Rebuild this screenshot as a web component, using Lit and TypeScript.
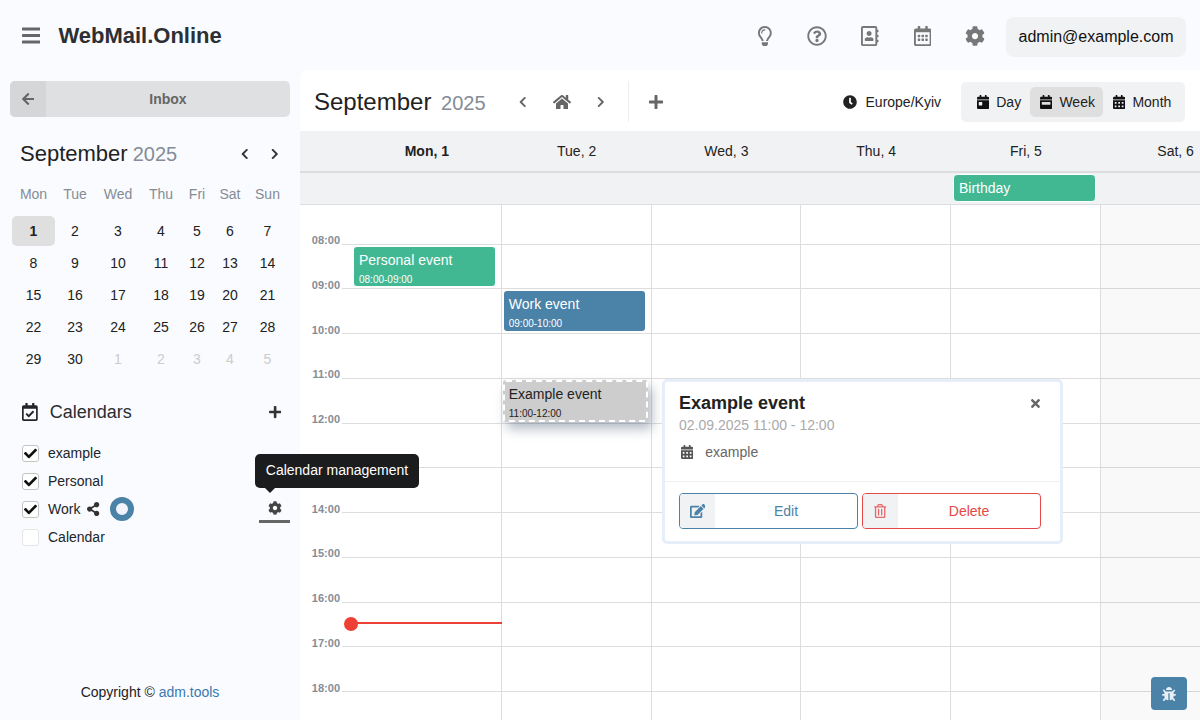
import { LitElement, html, css, svg } from "lit";
import { customElement } from "lit/decorators.js";

const P: Record<string, [number, string]> = {
  bars: [448, "M16 132h416c8.837 0 16-7.163 16-16V76c0-8.837-7.163-16-16-16H16C7.163 60 0 67.163 0 76v40c0 8.837 7.163 16 16 16zm0 160h416c8.837 0 16-7.163 16-16v-40c0-8.837-7.163-16-16-16H16c-8.837 0-16 7.163-16 16v40c0 8.837 7.163 16 16 16zm0 160h416c8.837 0 16-7.163 16-16v-40c0-8.837-7.163-16-16-16H16c-8.837 0-16 7.163-16 16v40c0 8.837 7.163 16 16 16z"],
  cog: [512, "M487.4 315.7l-42.6-24.6c4.3-23.2 4.3-47 0-70.2l42.6-24.6c4.9-2.8 7.1-8.6 5.5-14-11.1-35.6-30-67.8-54.7-94.6-3.8-4.1-10-5.1-14.8-2.3L380.8 110c-17.9-15.4-38.5-27.3-60.8-35.1V25.8c0-5.6-3.9-10.5-9.4-11.7-36.7-8.2-74.3-7.8-109.2 0-5.5 1.2-9.4 6.1-9.4 11.7V75c-22.2 7.9-42.8 19.8-60.8 35.1L88.7 85.5c-4.9-2.8-11-1.9-14.8 2.3-24.7 26.7-43.6 58.9-54.7 94.6-1.7 5.4.6 11.2 5.5 14L67.3 221c-4.3 23.2-4.3 47 0 70.2l-42.6 24.6c-4.9 2.8-7.1 8.6-5.5 14 11.1 35.6 30 67.8 54.7 94.6 3.8 4.1 10 5.1 14.8 2.3l42.6-24.6c17.9 15.4 38.5 27.3 60.8 35.1v49.2c0 5.6 3.9 10.5 9.4 11.7 36.7 8.2 74.3 7.8 109.2 0 5.5-1.2 9.4-6.1 9.4-11.7v-49.2c22.2-7.9 42.8-19.8 60.8-35.1l42.6 24.6c4.9 2.8 11 1.9 14.8-2.3 24.7-26.7 43.6-58.9 54.7-94.6 1.5-5.5-.7-11.3-5.6-14.1zM256 336c-44.1 0-80-35.9-80-80s35.9-80 80-80 80 35.9 80 80-35.9 80-80 80z"],
  left: [320, "M34.52 239.03L228.87 44.69c9.37-9.37 24.57-9.37 33.94 0l22.67 22.67c9.36 9.36 9.37 24.52.04 33.9L131.49 256l154.02 154.75c9.34 9.38 9.32 24.54-.04 33.9l-22.67 22.67c-9.37 9.37-24.57 9.37-33.94 0L34.52 272.97c-9.37-9.37-9.37-24.57 0-33.94z"],
  right: [320, "M285.476 272.971L91.132 467.314c-9.373 9.373-24.569 9.373-33.941 0l-22.667-22.667c-9.357-9.357-9.375-24.522-.04-33.901L188.505 256 34.484 101.255c-9.335-9.379-9.317-24.544.04-33.901l22.667-22.667c9.373-9.373 24.569-9.373 33.941 0L285.475 239.03c9.373 9.372 9.373 24.568.001 33.941z"],
  arrow: [448, "M257.5 445.1l-22.2 22.2c-9.4 9.4-24.6 9.4-33.9 0L7 273c-9.4-9.4-9.4-24.6 0-33.9L201.4 44.7c9.4-9.4 24.6-9.4 33.9 0l22.2 22.2c9.5 9.5 9.3 25-.4 34.3L136.6 216H424c13.3 0 24 10.7 24 24v32c0 13.3-10.7 24-24 24H136.6l120.5 114.8c9.8 9.3 10 24.8.4 34.3z"],
  plus: [448, "M416 208H272V64c0-17.67-14.33-32-32-32h-32c-17.67 0-32 14.33-32 32v144H32c-17.67 0-32 14.33-32 32v32c0 17.67 14.33 32 32 32h144v144c0 17.67 14.33 32 32 32h32c17.67 0 32-14.33 32-32V304h144c17.67 0 32-14.33 32-32v-32c0-17.67-14.33-32-32-32z"],
  times: [352, "M242.72 256l100.07-100.07c12.28-12.28 12.28-32.19 0-44.48l-22.24-22.24c-12.28-12.28-32.19-12.28-44.48 0L176 189.28 75.93 89.21c-12.28-12.28-32.19-12.28-44.48 0L9.21 111.45c-12.28 12.28-12.28 32.19 0 44.48L109.28 256 9.21 356.07c-12.28 12.28-12.28 32.19 0 44.48l22.24 22.24c12.28 12.28 32.2 12.28 44.48 0L176 322.72l100.07 100.07c12.28 12.28 32.2 12.28 44.48 0l22.24-22.24c12.28-12.28 12.28-32.19 0-44.48L242.72 256z"],
  check: [512, "M173.898 439.404l-166.4-166.4c-9.997-9.997-9.997-26.206 0-36.204l36.203-36.204c9.997-9.998 26.207-9.998 36.204 0L192 312.69 432.095 72.596c9.997-9.997 26.207-9.997 36.204 0l36.203 36.204c9.997 9.997 9.997 26.206 0 36.204l-294.4 294.401c-9.998 9.997-26.207 9.997-36.204-.001z"],
  share: [448, "M352 320c-22.608 0-43.387 7.819-59.79 20.895l-102.486-64.054a96.551 96.551 0 0 0 0-41.683l102.486-64.054C308.613 184.181 329.392 192 352 192c53.019 0 96-42.981 96-96S405.019 0 352 0s-96 42.981-96 96c0 7.158.79 14.13 2.276 20.841L155.79 180.895C139.387 167.819 118.608 160 96 160c-53.019 0-96 42.981-96 96s42.981 96 96 96c22.608 0 43.387-7.819 59.79-20.895l102.486 64.054A96.301 96.301 0 0 0 256 416c0 53.019 42.981 96 96 96s96-42.981 96-96-42.981-96-96-96z"],
  clock: [512, "M256,8C119,8,8,119,8,256S119,504,256,504,504,393,504,256,393,8,256,8Zm92.49,313h0l-20,25a16,16,0,0,1-22.49,2.5h0l-67-49.72a40,40,0,0,1-15-31.23V112a16,16,0,0,1,16-16h32a16,16,0,0,1,16,16V256l58,42.5A16,16,0,0,1,348.49,321Z"],
  home: [576, "M280.37 148.26L96 300.11V464a16 16 0 0 0 16 16l112.06-.29a16 16 0 0 0 15.92-16V368a16 16 0 0 1 16-16h64a16 16 0 0 1 16 16v95.64a16 16 0 0 0 16 16.05L464 480a16 16 0 0 0 16-16V300L295.67 148.26a12.19 12.19 0 0 0-15.3 0zM571.6 251.47L488 182.56V44.05a12 12 0 0 0-12-12h-56a12 12 0 0 0-12 12v72.61L318.47 43a48 48 0 0 0-61 0L4.34 251.47a12 12 0 0 0-1.6 16.9l25.5 31A12 12 0 0 0 45.15 301l235.22-193.74a12.19 12.19 0 0 1 15.3 0L530.9 301a12 12 0 0 0 16.9-1.6l25.5-31a12 12 0 0 0-1.7-16.93z"],
  calAlt: [448, "M0 464c0 26.5 21.5 48 48 48h352c26.5 0 48-21.5 48-48V192H0v272zm320-196c0-6.6 5.4-12 12-12h40c6.6 0 12 5.4 12 12v40c0 6.6-5.4 12-12 12h-40c-6.6 0-12-5.4-12-12v-40zm0 128c0-6.6 5.4-12 12-12h40c6.6 0 12 5.4 12 12v40c0 6.6-5.4 12-12 12h-40c-6.6 0-12-5.4-12-12v-40zM192 268c0-6.6 5.4-12 12-12h40c6.6 0 12 5.4 12 12v40c0 6.6-5.4 12-12 12h-40c-6.6 0-12-5.4-12-12v-40zm0 128c0-6.6 5.4-12 12-12h40c6.6 0 12 5.4 12 12v40c0 6.6-5.4 12-12 12h-40c-6.6 0-12-5.4-12-12v-40zM64 268c0-6.6 5.4-12 12-12h40c6.6 0 12 5.4 12 12v40c0 6.6-5.4 12-12 12H76c-6.6 0-12-5.4-12-12v-40zm0 128c0-6.6 5.4-12 12-12h40c6.6 0 12 5.4 12 12v40c0 6.6-5.4 12-12 12H76c-6.6 0-12-5.4-12-12v-40zM400 64h-48V16c0-8.8-7.2-16-16-16h-32c-8.8 0-16 7.2-16 16v48H160V16c0-8.8-7.2-16-16-16h-32c-8.8 0-16 7.2-16 16v48H48C21.5 64 0 85.5 0 112v48h448v-48c0-26.5-21.5-48-48-48z"],
  calDay: [448, "M0 464c0 26.5 21.5 48 48 48h352c26.5 0 48-21.5 48-48V192H0v272zm64-192c0-8.8 7.2-16 16-16h96c8.8 0 16 7.2 16 16v96c0 8.8-7.2 16-16 16H80c-8.8 0-16-7.2-16-16v-96zM400 64h-48V16c0-8.8-7.2-16-16-16h-32c-8.8 0-16 7.2-16 16v48H160V16c0-8.8-7.2-16-16-16h-32c-8.8 0-16 7.2-16 16v48H48C21.5 64 0 85.5 0 112v48h448v-48c0-26.5-21.5-48-48-48z"],
  calWeek: [448, "M0 464c0 26.5 21.5 48 48 48h352c26.5 0 48-21.5 48-48V192H0v272zm64-192c0-8.8 7.2-16 16-16h288c8.8 0 16 7.2 16 16v64c0 8.8-7.2 16-16 16H80c-8.8 0-16-7.2-16-16v-64zM400 64h-48V16c0-8.8-7.2-16-16-16h-32c-8.8 0-16 7.2-16 16v48H160V16c0-8.8-7.2-16-16-16h-32c-8.8 0-16 7.2-16 16v48H48C21.5 64 0 85.5 0 112v48h448v-48c0-26.5-21.5-48-48-48z"],
  edit: [576, "M402.6 83.2l90.2 90.2c3.8 3.8 3.8 10 0 13.8L274.4 405.6l-92.8 10.3c-12.4 1.4-22.9-9.1-21.5-21.5l10.3-92.8L388.8 83.2c3.8-3.8 10-3.8 13.8 0zm162-22.9l-48.8-48.8c-15.2-15.2-39.9-15.2-55.2 0l-35.4 35.4c-3.8 3.8-3.8 10 0 13.8l90.2 90.2c3.8 3.8 10 3.8 13.8 0l35.4-35.4c15.2-15.3 15.2-40 0-55.2zM384 346.2V448H64V128h229.8c3.2 0 6.2-1.3 8.5-3.5l40-40c7.6-7.6 2.2-20.5-8.5-20.5H48C21.5 64 0 85.5 0 112v352c0 26.5 21.5 48 48 48h352c26.5 0 48-21.5 48-48V306.2c0-10.7-12.9-16-20.5-8.5l-40 40c-2.2 2.3-3.5 5.3-3.5 8.5z"],
  trash: [448, "M268 416h24a12 12 0 0 0 12-12V188a12 12 0 0 0-12-12h-24a12 12 0 0 0-12 12v216a12 12 0 0 0 12 12zM432 80h-82.41l-34-56.7A48 48 0 0 0 274.41 0H173.59a48 48 0 0 0-41.16 23.3L98.41 80H16A16 16 0 0 0 0 96v16a16 16 0 0 0 16 16h16v336a48 48 0 0 0 48 48h288a48 48 0 0 0 48-48V128h16a16 16 0 0 0 16-16V96a16 16 0 0 0-16-16zM171.84 50.91A6 6 0 0 1 177 48h94a6 6 0 0 1 5.15 2.91L293.61 80H154.39zM368 464H80V128h288zm-212-48h24a12 12 0 0 0 12-12V188a12 12 0 0 0-12-12h-24a12 12 0 0 0-12 12v216a12 12 0 0 0 12 12z"],
  question: [512, "M256 8C119.043 8 8 119.083 8 256c0 136.997 111.043 248 248 248s248-111.003 248-248C504 119.083 392.957 8 256 8zm0 448c-110.532 0-200-89.431-200-200 0-110.495 89.472-200 200-200 110.491 0 200 89.471 200 200 0 110.53-89.431 200-200 200zm107.244-255.2c0 67.052-72.421 68.084-72.421 92.863V300c0 6.627-5.373 12-12 12h-45.647c-6.627 0-12-5.373-12-12v-8.659c0-35.745 27.1-50.034 47.579-61.516 17.561-9.845 28.324-16.541 28.324-29.579 0-17.246-21.999-28.693-39.784-28.693-23.189 0-33.894 10.977-48.942 29.969-4.057 5.12-11.46 6.071-16.666 2.124l-27.824-21.098c-5.107-3.872-6.251-11.066-2.644-16.363C184.846 131.491 214.94 112 261.794 112c49.071 0 101.45 38.304 101.45 88.8zM298 368c0 23.159-18.841 42-42 42s-42-18.841-42-42 18.841-42 42-42 42 18.841 42 42z"],
  bulb: [352, "M176 80c-52.94 0-96 43.06-96 96 0 8.84 7.16 16 16 16s16-7.16 16-16c0-35.3 28.72-64 64-64 8.84 0 16-7.16 16-16s-7.16-16-16-16zM96.06 459.17c0 3.15.93 6.22 2.68 8.84l24.51 36.84c2.97 4.46 7.97 7.14 13.32 7.14h78.85c5.36 0 10.36-2.68 13.32-7.14l24.51-36.84c1.74-2.62 2.67-5.7 2.68-8.84l.05-43.18H96.02l.04 43.18zM176 0C73.72 0 0 82.97 0 176c0 44.37 16.45 84.85 43.56 115.78 16.64 18.99 42.74 58.8 52.42 92.16v.06h48v-.12c-.01-4.77-.72-9.51-2.15-14.07-5.59-17.81-22.82-64.77-62.17-109.67-20.54-23.43-31.52-53.15-31.61-84.14-.2-73.64 59.67-128 127.95-128 70.58 0 128 57.42 128 128 0 30.97-11.24 60.85-31.65 84.14-39.11 44.61-56.42 91.47-62.1 109.46a47.507 47.507 0 0 0-2.22 14.3v.1h48v-.05c9.68-33.37 35.78-73.18 52.42-92.16C335.55 260.85 352 220.37 352 176 352 78.8 273.2 0 176 0z"],
  book: [448, "M436 160c6.6 0 12-5.4 12-12v-40c0-6.6-5.4-12-12-12h-20V48c0-26.5-21.5-48-48-48H48C21.5 0 0 21.5 0 48v416c0 26.5 21.5 48 48 48h320c26.5 0 48-21.5 48-48v-48h20c6.6 0 12-5.4 12-12v-40c0-6.6-5.4-12-12-12h-20v-64h20c6.6 0 12-5.4 12-12v-40c0-6.6-5.4-12-12-12h-20v-64h20zm-68 304H48V48h320v416zM208 256c35.3 0 64-28.7 64-64s-28.7-64-64-64-64 28.7-64 64 28.7 64 64 64zm-89.6 128h179.2c12.4 0 22.4-8.6 22.4-19.2v-19.2c0-31.8-30.1-57.6-67.2-57.6-10.8 0-18.7 8-44.8 8-26.9 0-33.4-8-44.8-8-37.1 0-67.2 25.8-67.2 57.6v19.2c0 10.6 10 19.2 22.4 19.2z"],
  calReg: [448, "M148 288h-40c-6.6 0-12-5.4-12-12v-40c0-6.6 5.4-12 12-12h40c6.6 0 12 5.4 12 12v40c0 6.6-5.4 12-12 12zm108-12v-40c0-6.6-5.4-12-12-12h-40c-6.6 0-12 5.4-12 12v40c0 6.6 5.4 12 12 12h40c6.6 0 12-5.4 12-12zm96 0v-40c0-6.6-5.4-12-12-12h-40c-6.6 0-12 5.4-12 12v40c0 6.6 5.4 12 12 12h40c6.6 0 12-5.4 12-12zm-96 96v-40c0-6.6-5.4-12-12-12h-40c-6.6 0-12 5.4-12 12v40c0 6.6 5.4 12 12 12h40c6.6 0 12-5.4 12-12zm-96 0v-40c0-6.6-5.4-12-12-12h-40c-6.6 0-12 5.4-12 12v40c0 6.6 5.4 12 12 12h40c6.6 0 12-5.4 12-12zm192 0v-40c0-6.6-5.4-12-12-12h-40c-6.6 0-12 5.4-12 12v40c0 6.6 5.4 12 12 12h40c6.6 0 12-5.4 12-12zm96-260v352c0 26.5-21.5 48-48 48H48c-26.5 0-48-21.5-48-48V112c0-26.5 21.5-48 48-48h48V12c0-6.6 5.4-12 12-12h40c6.6 0 12 5.4 12 12v52h128V12c0-6.6 5.4-12 12-12h40c6.6 0 12 5.4 12 12v52h48c26.5 0 48 21.5 48 48zm-48 346V160H48v298c0 3.3 2.7 6 6 6h340c3.3 0 6-2.7 6-6z"],
  calCheck: [448, "M400 64h-48V12c0-6.627-5.373-12-12-12h-40c-6.627 0-12 5.373-12 12v52H160V12c0-6.627-5.373-12-12-12h-40c-6.627 0-12 5.373-12 12v52H48C21.49 64 0 85.49 0 112v352c0 26.51 21.49 48 48 48h352c26.51 0 48-21.49 48-48V112c0-26.51-21.49-48-48-48zm-6 400H54a6 6 0 0 1-6-6V160h352v298a6 6 0 0 1-6 6zm-52.849-200.65L198.842 404.519c-4.705 4.667-12.303 4.637-16.971-.068l-75.091-75.699c-4.667-4.705-4.637-12.303.068-16.971l22.719-22.536c4.705-4.667 12.303-4.637 16.97.069l44.104 44.461 111.072-110.181c4.705-4.667 12.303-4.637 16.971.068l22.536 22.718c4.667 4.706 4.637 12.304-.069 16.971z"],
  bug: [512, "M511.988 288.9c-.478 17.43-15.217 31.1-32.653 31.1H424v16c0 21.864-4.882 42.584-13.6 61.145l60.228 60.228c12.496 12.497 12.496 32.758 0 45.255-12.498 12.497-32.759 12.496-45.256 0l-54.736-54.736C345.886 467.965 314.351 480 280 480V236c0-6.627-5.373-12-12-12h-24c-6.627 0-12 5.373-12 12v244c-34.351 0-65.886-12.035-90.636-32.108l-54.736 54.736c-12.498 12.497-32.759 12.496-45.256 0-12.496-12.497-12.496-32.758 0-45.255l60.228-60.228C92.882 378.584 88 357.864 88 336v-16H32.666C15.23 320 .491 306.33.013 288.9-.484 270.816 14.028 256 32 256h56v-58.745l-46.628-46.628c-12.496-12.497-12.496-32.758 0-45.255 12.498-12.497 32.758-12.497 45.256 0L141.255 160h229.489l54.627-54.627c12.498-12.497 32.758-12.497 45.256 0 12.496 12.497 12.496 32.758 0 45.255L424 197.255V256h56c17.972 0 32.484 14.816 31.988 32.9zM257 0c-61.856 0-112 50.144-112 112h224C369 50.144 318.856 0 257 0z"],
};

const icon = (name: string, h: number) => {
  const [w, d] = P[name];
  return html`<svg class="ic" viewBox="0 0 ${w} 512" height=${h} width=${(h * w) / 512}>${svg`<path fill="currentColor" d=${d}></path>`}</svg>`;
};

const WEEK = ["Mon", "Tue", "Wed", "Thu", "Fri", "Sat", "Sun"];
const DAYS: [number, boolean][] = [];
for (let i = 1; i <= 30; i++) DAYS.push([i, false]);
for (let i = 1; i <= 5; i++) DAYS.push([i, true]);
const COLS = ["Mon, 1", "Tue, 2", "Wed, 3", "Thu, 4", "Fri, 5", "Sat, 6"];
/* The 13:00 label sits fully under the tooltip in the reference, so it shows no text there. */
const HOURS = ["08:00", "09:00", "10:00", "11:00", "12:00", "", "14:00", "15:00", "16:00", "17:00", "18:00"];
const CALS: [string, boolean][] = [["example", true], ["Personal", true], ["Work", true], ["Calendar", false]];

@customElement("app-root")
export class AppRoot extends LitElement {
  static styles = css`
    :host { display: block; width: 1200px; height: 720px; overflow: hidden; background: #f9fbff; font-family: "Liberation Sans", Arial, sans-serif; color: #212529; font-size: 14px; }
    * { box-sizing: border-box; }
    .ic { display: block; flex: none; }
    .app { display: flex; flex-direction: column; height: 720px; }
    .top { height: 71px; flex: none; display: flex; align-items: center; padding: 0 14px 0 22px; }
    .burger { color: #666; margin-right: 18px; margin-top: -1px; }
    .logo { font-size: 22px; font-weight: 700; color: #2d2f33; flex: 1; margin-top: 1px; }
    .top-ic { width: 52.5px; display: flex; justify-content: center; color: #777; margin-top: 1px; }
    .user { margin-left: 5px; margin-top: 3px; width: 180px; height: 40px; border-radius: 8px; background: #f1f2f4; display: flex; align-items: center; justify-content: center; font-size: 16px; color: #111; }
    .body { flex: 1; display: flex; min-height: 0; }
    .side { width: 300px; flex: none; display: flex; flex-direction: column; padding: 10px 10px 0; position: relative; z-index: 2; }
    .inbox { height: 36px; display: flex; border-radius: 5px; overflow: hidden; background: #dfe0e2; font-weight: 700; font-size: 14px; color: #666; }
    .inbox .back { width: 36px; background: #d5d6d8; display: flex; align-items: center; justify-content: center; }
    .inbox .lab { flex: 1; display: flex; align-items: center; justify-content: center; }
    .mhead { display: flex; align-items: center; margin: 25px 0 0 10px; height: 24px; }
    .mtitle { font-size: 22px; flex: 1; color: #222; }
    .mtitle span { font-size: 20px; color: #858c96; margin-left: -1px; }
    .mnav { display: flex; color: #333; gap: 22px; margin-right: 12px; align-items: center; }
    .mgrid { display: grid; grid-template-columns: 43px 40px 46px 40px 32px 34px 41px; grid-auto-rows: 30px; row-gap: 2px; margin: 18px 0 0 2px; text-align: center; }
    .wd { color: #858c96; height: 22px; line-height: 18px; margin-top: 1px; align-self: start; }
    .d { display: flex; align-items: center; justify-content: center; color: #222; border-radius: 5px; }
    .d.sel { background: #dfdfdf; font-weight: 700; }
    .d.off { color: #ccc; }
    .chead { display: flex; align-items: center; margin: 26px 0 0 12px; height: 24px; }
    .chead .t { font-size: 18px; margin-left: 12px; flex: 1; color: #2a2d31; }
    .chead .add { margin-right: 9px; color: #333; }
    .clist { margin: 15px 0 0 12px; display: flex; flex-direction: column; }
    .crow { height: 28px; display: flex; align-items: center; position: relative; }
    .cb { width: 17px; height: 17px; border: 1px solid #c4c4c4; border-radius: 3px; background: #fff; display: flex; align-items: center; justify-content: center; color: #111; margin-right: 9px; }
    .cb.off { border-color: #e6e6e6; }
    .share { color: #333; margin-left: 7px; }
    .ring { width: 24px; height: 24px; border-radius: 50%; border: 6px solid #4b82a8; background: #f1f5fb; margin-left: 10px; }
    .mgr { position: absolute; left: 237px; top: 0; width: 31px; height: 28px; border-bottom: 3px solid #666; display: flex; align-items: center; justify-content: center; color: #444; }
    .tip { position: absolute; left: -4px; top: -41px; height: 34px; width: 164px; padding-bottom: 2px; background: #1b1c1e; color: #fff; border-radius: 5px; display: flex; align-items: center; justify-content: center; white-space: nowrap; }
    .tip::after { content: ""; position: absolute; left: 10px; bottom: -5px; border: 5px solid transparent; border-bottom: 0; border-top-color: #1b1c1e; }
    .copy { margin-top: auto; height: 28px; margin-bottom: 14px; text-align: center; color: #222; line-height: 28px; }
    .copy a { color: #3a78b0; text-decoration: none; }
    .main { flex: 1; min-width: 0; background: #fff; border-top-left-radius: 8px; display: flex; flex-direction: column; position: relative; overflow: hidden; margin-top: -1px; }
    .tb { height: 61px; flex: none; display: flex; align-items: center; padding: 2px 15px 0 14px; }
    .tb-title { font-size: 24px; color: #222; width: 197px; white-space: nowrap; }
    .tb-title span { font-size: 20px; color: #858c96; margin-left: 3px; }
    .nav { color: #666; display: flex; align-items: center; width: 118px; }
    .nav .s { width: 24px; display: flex; justify-content: center; }
    .nav .h { width: 54px; display: flex; justify-content: center; }
    .sep { width: 1px; height: 41px; background: #eee; margin-left: -1px; }
    .tb-add { color: #666; margin-left: 20px; flex: 1; }
    .tz { display: flex; align-items: center; color: #222; margin-right: 20px; }
    .tz .ic { margin-right: 9px; }
    .seg { height: 40px; width: 224px; background: #f1f2f4; border-radius: 5px; display: flex; align-items: center; padding: 0 5px; margin-top: 1px; }
    .seg div { height: 30px; display: flex; align-items: center; color: #222; border-radius: 5px; }
    .seg .ic { color: #111; margin-right: 7px; }
    .seg .a { background: #dfdfdf; padding: 0 8px 0 10px; margin: 0 10px 0 9px; width: 73px; }
    .seg .p { padding-left: 11px; }
    .seg .n { padding: 0; }
    .heads-wrap { background: #f1f2f4; flex: none; overflow: hidden; height: 42px; border-bottom: 2px solid #dcdde0; }
    .heads { height: 40px; display: grid; grid-template-columns: repeat(6, 149.75px); padding-left: 52px; width: 950.5px; }
    .hc { display: flex; align-items: center; justify-content: center; color: #222; }
    .hc.b { font-weight: 700; }
    .allday { height: 32px; flex: none; background: #f1f2f4; border-bottom: 1px solid #dcdde0; padding: 1px 0 0 653px; }
    .ev { border-radius: 3px; color: #fff; padding: 5px; overflow: hidden; }
    .ev .n { line-height: 16px; white-space: nowrap; }
    .ev .tm { font-size: 10px; line-height: 12px; margin-top: 6px; }
    .bd { width: 143px; height: 28px; background: #41b892; border: 1px solid #fff; border-radius: 4px; color: #fff; padding: 5px 5px 0; line-height: 17px; }
    .grid { flex: 1; position: relative; min-height: 0; overflow: hidden; background: #fff; padding-top: 38.6px; }
    .hr { height: 44.75px; display: flex; }
    .hr .l { width: 42px; padding-right: 2px; text-align: right; font-size: 11px; font-weight: 700; color: #868c96; line-height: 12px; margin-top: -9.6px; height: 12px; }
    .hr .ln { flex: 1; border-top: 1px solid #ddd; }
    .cols { position: absolute; left: 52px; top: 0; bottom: 0; display: grid; grid-template-columns: repeat(6, 149.75px); }
    .col { border-right: 1px solid #ddd; position: relative; }
    .col.we { background: rgba(0,0,0,0.025); border-right: 0; }
    .col .ev { position: absolute; left: 2px; width: 141px; }
    .ex { background: #cdcdcd; color: #222 !important; border: 2px dashed #fff; padding: 4px 4px !important; box-shadow: 4px 7px 12px rgba(40,60,90,.35); width: 145px !important; left: 1px !important; }
    .now { position: absolute; left: 44px; top: 412px; width: 158px; height: 14px; }
    .now .dot { position: absolute; left: 0; top: 0; width: 14px; height: 14px; border-radius: 50%; background: #ee4035; }
    .now .bar { position: absolute; left: 7px; right: 0; top: 5px; height: 2px; background: #ee4035; }
    .pop { position: absolute; left: 362px; top: 309px; width: 401px; height: 165px; background: #fff; border: 3px solid #e6eefa; border-radius: 5px; display: flex; flex-direction: column; }
    .pop .in { height: 100px; padding: 10px 14px 0 14px; border-bottom: 1px solid #f0f0f0; flex: none; position: relative; }
    .pop .ttl { font-size: 18px; font-weight: 700; color: #222; line-height: 22px; }
    .pop .dt { color: #aaa; line-height: 16px; margin-top: 3px; }
    .pop .loc { display: flex; align-items: center; color: #666; margin-top: 11px; padding-left: 2px; line-height: 16px; }
    .pop .loc .ic { color: #555; margin-right: 12px; }
    .pop .x { position: absolute; right: 20px; top: 15px; color: #666; }
    .acts { display: flex; gap: 4px; padding: 11px 19px 0 14px; }
    .btn { flex: 1; height: 36px; border: 1px solid; border-radius: 4px; display: flex; overflow: hidden; background: #fff; }
    .btn .bi { width: 35px; background: #f1f2f4; display: flex; align-items: center; justify-content: center; flex: none; }
    .btn .bl { flex: 1; display: flex; align-items: center; justify-content: center; }
    .btn.e { color: #4b82a8; border-color: #4b82a8; }
    .btn.r { color: #e44848; border-color: #e44848; }
    .btn.r .ic { opacity: .8; }
    .bugb { position: absolute; left: 851px; top: 607px; width: 36px; height: 33px; border-radius: 4px; background: #4b82a8; color: #e8f0f6; display: flex; align-items: center; justify-content: center; }
  `;

  render() {
    return html`<div class="app">
      <div class="top">
        <span class="burger">${icon("bars", 21)}</span>
        <div class="logo">WebMail.Online</div>
        ${["bulb", "question", "book", "calReg", "cog"].map((n) => html`<span class="top-ic">${icon(n, 20)}</span>`)}
        <div class="user">admin@example.com</div>
      </div>
      <div class="body">
        <aside class="side">
          <div class="inbox"><span class="back">${icon("arrow", 14)}</span><span class="lab">Inbox</span></div>
          <div class="mhead">
            <div class="mtitle">September <span>2025</span></div>
            <div class="mnav">${icon("left", 12)}${icon("right", 12)}</div>
          </div>
          <div class="mgrid">
            ${WEEK.map((w) => html`<div class="wd">${w}</div>`)}
            ${DAYS.map(([d, off], i) => html`<div class="d ${i === 0 ? "sel" : ""} ${off ? "off" : ""}">${d}</div>`)}
          </div>
          <div class="chead">${icon("calCheck", 18)}<span class="t">Calendars</span><span class="add">${icon("plus", 14)}</span></div>
          <div class="clist">
            ${CALS.map(([n, on]) => html`<div class="crow">
              <span class="cb ${on ? "" : "off"}">${on ? icon("check", 13) : ""}</span>${n}
              ${n === "Work"
                ? html`<span class="share">${icon("share", 14)}</span><span class="ring"></span>
                    <span class="mgr">${icon("cog", 14)}<span class="tip">Calendar management</span></span>`
                : ""}
            </div>`)}
          </div>
          <div class="copy">Copyright © <a>adm.tools</a></div>
        </aside>
        <main class="main">
          <div class="tb">
            <div class="tb-title">September <span>2025</span></div>
            <div class="nav"><span class="s">${icon("left", 12)}</span><span class="h">${icon("home", 16)}</span><span class="s">${icon("right", 12)}</span></div>
            <span class="sep"></span>
            <span class="tb-add">${icon("plus", 16)}</span>
            <div class="tz">${icon("clock", 14)}Europe/Kyiv</div>
            <div class="seg">
              <div class="p">${icon("calDay", 14)}Day</div>
              <div class="a">${icon("calWeek", 14)}Week</div>
              <div class="n">${icon("calAlt", 14)}Month</div>
            </div>
          </div>
          <div class="heads-wrap"><div class="heads">${COLS.map((c, i) => html`<div class="hc ${i === 0 ? "b" : ""}">${c}</div>`)}</div></div>
          <div class="allday"><div class="bd">Birthday</div></div>
          <div class="grid">
            ${HOURS.map((h) => html`<div class="hr"><span class="l">${h}</span><span class="ln"></span></div>`)}
            <div class="cols">
              <div class="col"><div class="ev" style="top:42px;height:39px;background:#41b892"><div class="n">Personal event</div><div class="tm">08:00-09:00</div></div></div>
              <div class="col">
                <div class="ev" style="top:86px;height:40px;background:#4b82a8"><div class="n">Work event</div><div class="tm">09:00-10:00</div></div>
                <div class="ev ex" style="top:175px;height:42px"><div class="n">Example event</div><div class="tm">11:00-12:00</div></div>
              </div>
              <div class="col"></div><div class="col"></div><div class="col"></div><div class="col we"></div>
            </div>
            <div class="now"><span class="bar"></span><span class="dot"></span></div>
          </div>
          <div class="pop">
            <div class="in">
              <div class="ttl">Example event</div>
              <div class="dt">02.09.2025 11:00 - 12:00</div>
              <div class="loc">${icon("calAlt", 14)}example</div>
              <span class="x">${icon("times", 13)}</span>
            </div>
            <div class="acts">
              <div class="btn e"><span class="bi">${icon("edit", 14)}</span><span class="bl">Edit</span></div>
              <div class="btn r"><span class="bi">${icon("trash", 14)}</span><span class="bl">Delete</span></div>
            </div>
          </div>
          <div class="bugb">${icon("bug", 14)}</div>
        </main>
      </div>
    </div>`;
  }
}
